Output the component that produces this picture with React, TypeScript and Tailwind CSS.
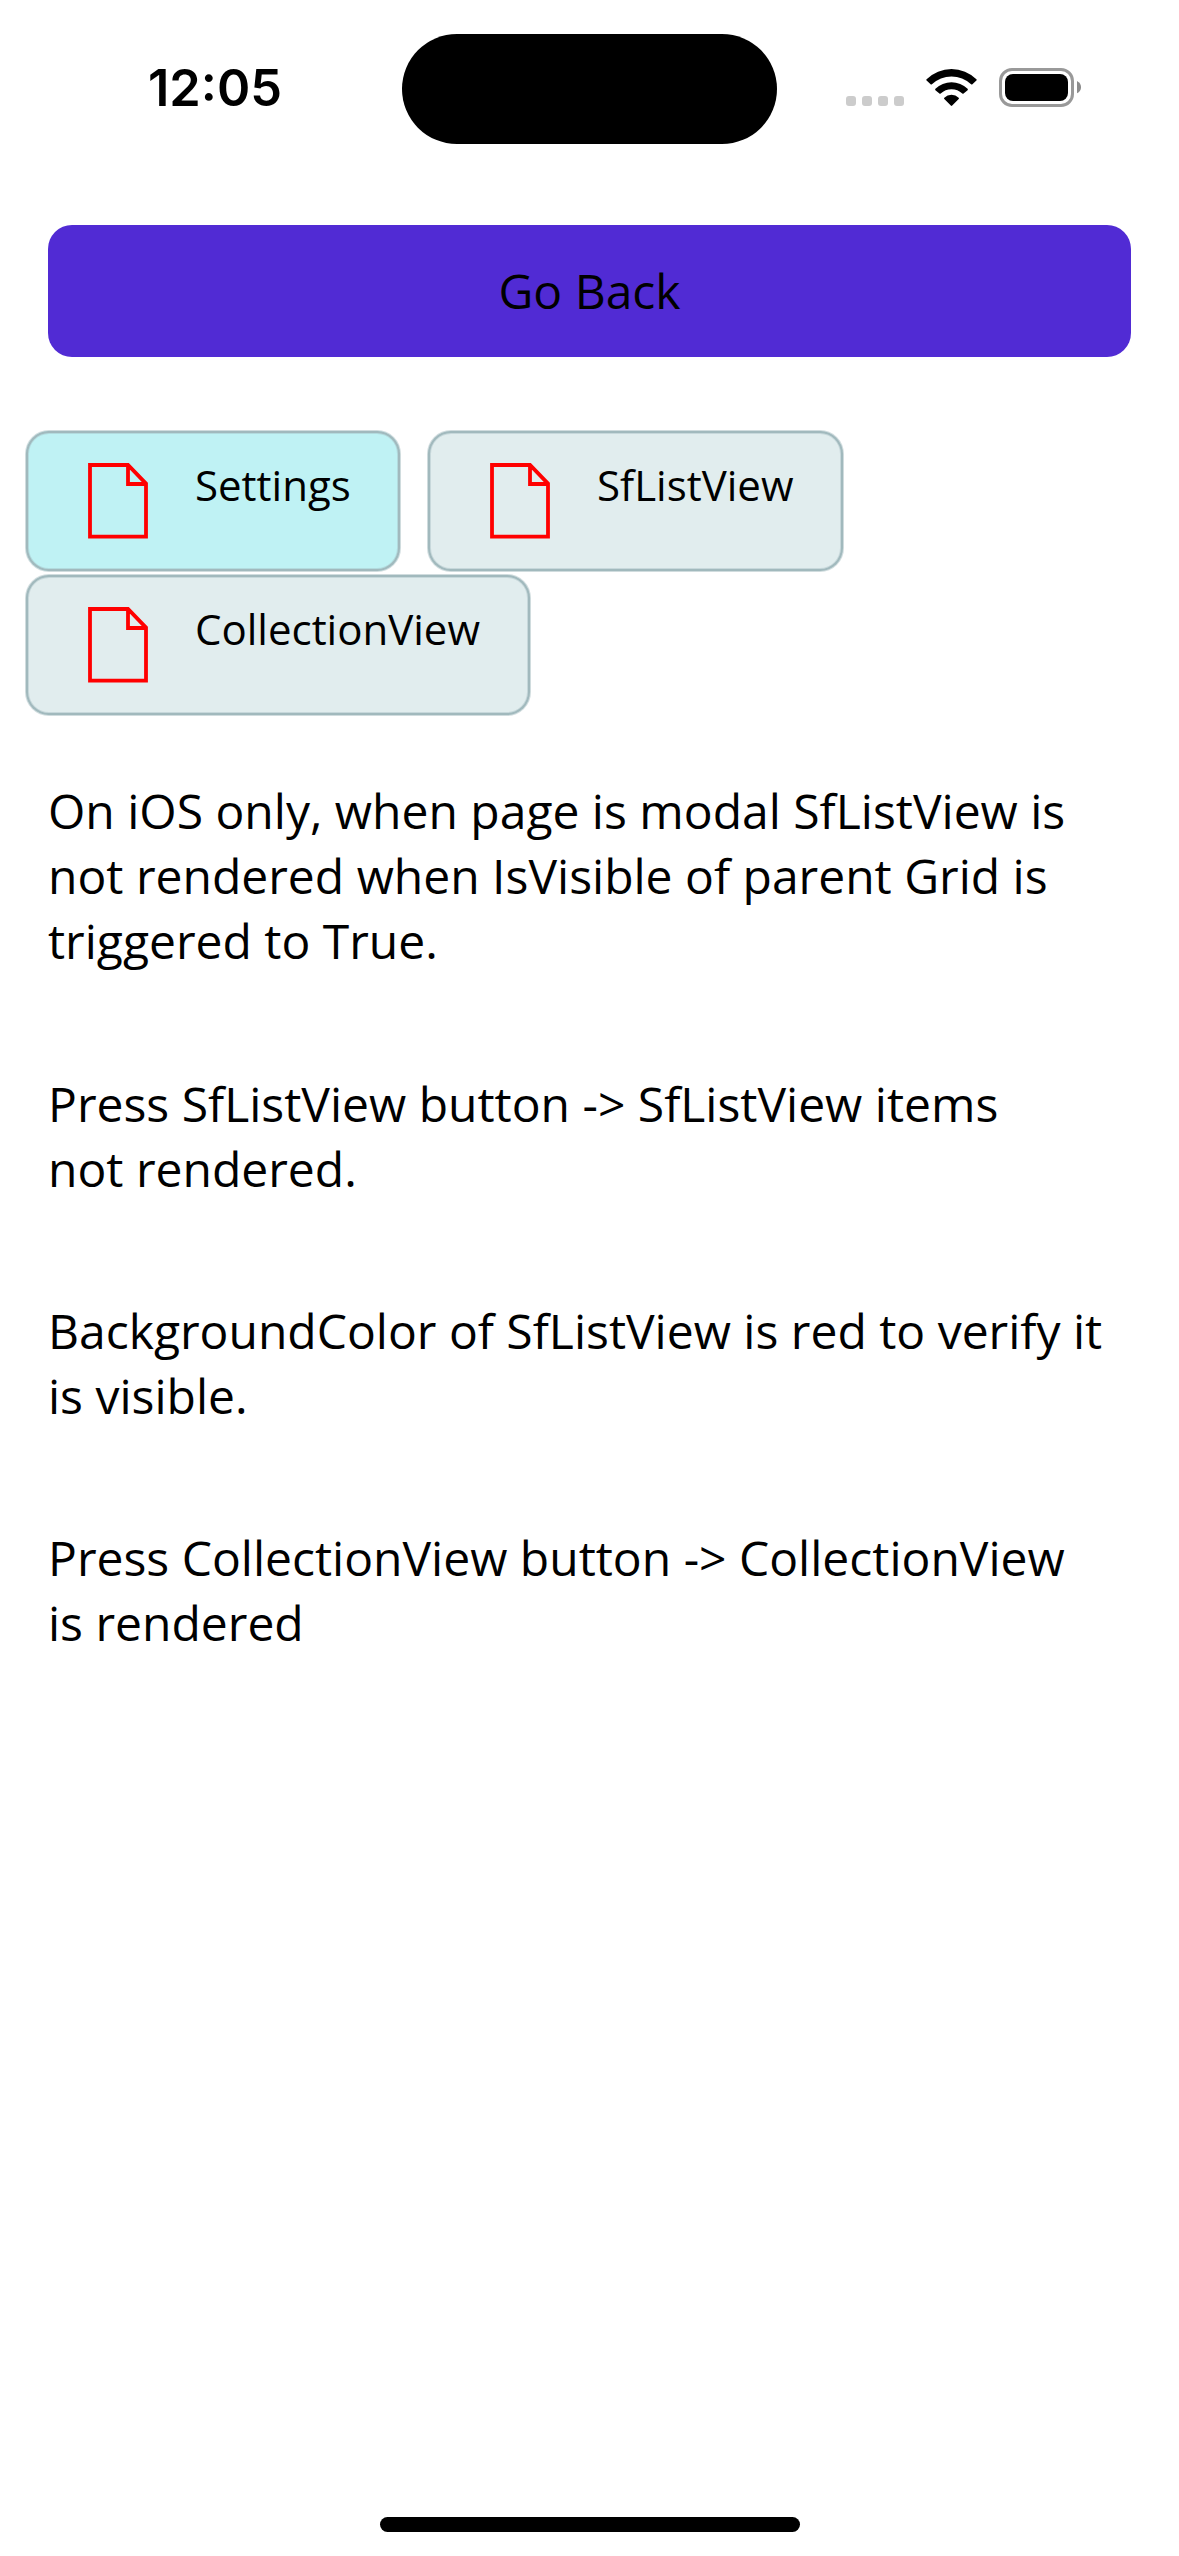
const FileIcon = () => (
  <svg width="60" height="76" viewBox="0 0 60 76" fill="none" stroke="#ff0000" strokeWidth="3.8" className="mt-[32px] shrink-0">
    <path d="M2 2H40L58 20.6V73.7H2ZM40 2V21H58" />
  </svg>
);
const Chip = ({ label, cls }: { label: string; cls: string }) => (
  <div className={`flex h-[142px] rounded-[24px] border border-[#a1b9bd]/50 bg-clip-padding pl-[62px] shadow-[inset_0_0_0_2px_#a1b9bd,inset_0_0_0_3px_rgba(161,185,189,0.4)] ${cls}`}>
    <FileIcon />
    <span className="ml-[47px] mt-[25px] whitespace-nowrap text-[42px] leading-[57px]">{label}</span>
  </div>
);
const StatusIcons = () => (
  <svg className="ml-[69px] mt-[30px]" width="240" height="50" viewBox="0 0 240 50">
    <g fill="#ccc">
      <rect x="0" y="32" width="10" height="10" rx="3" />
      <rect x="16" y="32" width="10" height="10" rx="3" />
      <rect x="32" y="32" width="10" height="10" rx="3" />
      <rect x="48" y="32" width="10" height="10" rx="3" />
    </g>
    <path d="M80.6 15.2A35.5 35.5 0 0 1 130.4 15.2Q131 15.9 130.4 16.6L126.4 20.3Q125.8 20.8 125.1 20.2A28.5 28.5 0 0 0 85.9 20.2Q85.2 20.8 84.6 20.3L80.6 16.6Q80 15.9 80.6 15.2Z" />
    <path d="M89.4 24.8A23 23 0 0 1 121.6 24.8Q122.2 25.5 121.6 26.2L117.6 29.6Q117 30.1 116.3 29.5A15.7 15.7 0 0 0 94.7 29.5Q94 30.1 93.4 29.6L89.4 26.2Q88.8 25.5 89.4 24.8Z" />
    <path d="M98.3 33.7A10.5 10.5 0 0 1 112.7 33.7Q113.3 34.4 112.7 35.1L106.2 41.6Q105.5 42.3 104.8 41.6L98.3 35.1Q97.7 34.4 98.3 33.7Z" />
    <rect x="154.5" y="5.5" width="72" height="36" rx="11.5" fill="none" stroke="#999" strokeWidth="3" />
    <rect x="159" y="10" width="63" height="27" rx="8" />
    <path d="M231 17Q235 19 235 23.2T231 29.3Z" fill="#8c8c8c" />
  </svg>
);
export default function App() {
  return (
    <main className="flex h-[2556px] w-[1179px] flex-col overflow-hidden bg-white font-['Open_Sans',sans-serif] text-black">
      <header className="flex h-[177px] shrink-0 pt-[34px]">
        <div className="ml-[148px] mt-[23px] w-[254px] font-['Inter',sans-serif] text-[50.5px] font-semibold leading-[62px]">12:05</div>
        <div className="h-[110px] w-[375px] rounded-full bg-black" />
        <StatusIcons />
      </header>
      <button className="mx-[48px] mt-[48px] h-[132px] shrink-0 rounded-[24px] bg-[#512bd4] text-[48px]">Go Back</button>
      <div className="ml-[25px] mt-[73px] flex gap-[26px]">
        <Chip label="Settings" cls="w-[376px] bg-[#bff2f4]" />
        <Chip label="SfListView" cls="w-[417px] bg-[#e1edee]" />
      </div>
      <div className="ml-[25px] mt-[2px] flex"><Chip label="CollectionView" cls="w-[506px] bg-[#e1edee]" /></div>
      <section className="ml-[48px] mt-[62px] flex flex-col gap-[97px] text-[48px] leading-[65px]">
        <p className="mb-px">On iOS only, when page is modal SfListView is<br />not rendered when IsVisible of parent Grid is<br />triggered to True.</p>
        <p>Press SfListView button -&gt; SfListView items<br />not rendered.</p>
        <p>BackgroundColor of SfListView is red to verify it<br />is visible.</p>
        <p>Press CollectionView button -&gt; CollectionView<br />is rendered</p>
      </section>
      <div className="mx-auto mb-[24px] mt-auto h-[15px] w-[420px] rounded-full bg-black" />
    </main>
  );
}
